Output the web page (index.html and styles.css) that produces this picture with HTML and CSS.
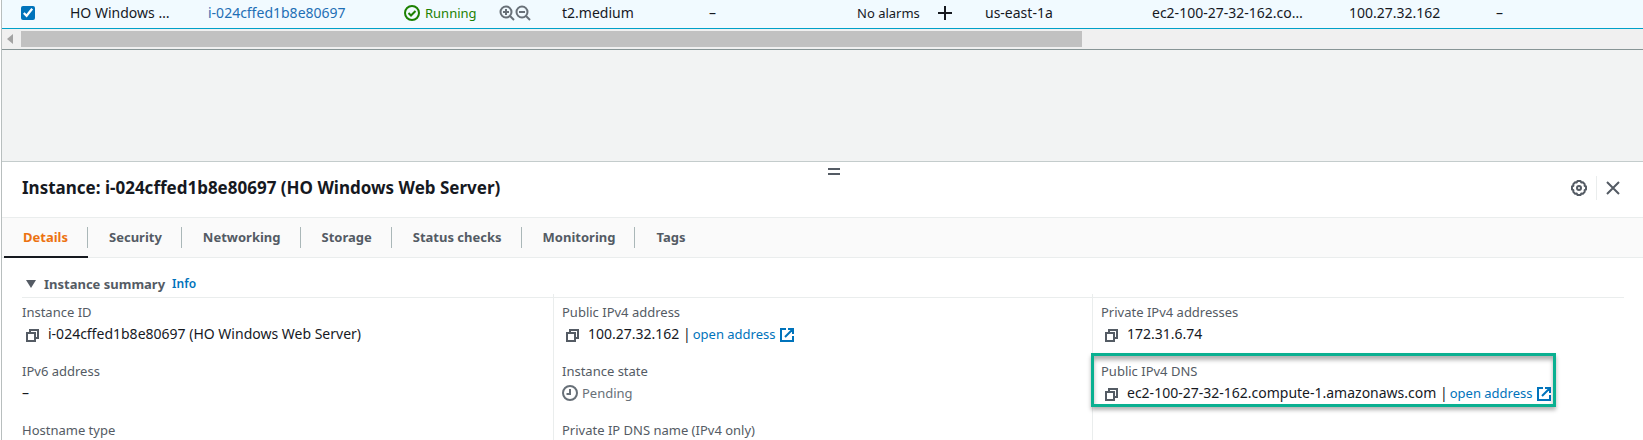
FILE: index.html
```html
<!DOCTYPE html>
<html lang="en">
<head>
<meta charset="utf-8">
<title>Instances</title>
<link rel="stylesheet" href="styles.css">
</head>
<body>
<svg class="defs" aria-hidden="true">
  <symbol id="copy" viewBox="0 0 14 14"><path d="M1 5h8v8H1zM4 5V2h8v8H9" fill="none" stroke="currentColor" stroke-width="2"/></symbol>
  <symbol id="external" viewBox="0 0 14 14"><path d="M6 1H1v12h12V8M8 1h5v5M13 1L5 9" fill="none" stroke="currentColor" stroke-width="2"/></symbol>
</svg>
<main class="page">
  <div class="table-wrap">
    <table class="instances">
      <colgroup><col class="c-check"><col class="c-name"><col class="c-id"><col class="c-state"><col class="c-type"><col class="c-status"><col class="c-alarm"><col class="c-zone"><col class="c-dns"><col class="c-ip"><col></colgroup>
      <tbody>
        <tr>
          <td><input class="check" type="checkbox" aria-label="Select instance" checked></td>
          <td>HO Windows …</td>
          <td><a class="id-link" href="#">i-024cffed1b8e80697</a></td>
          <td>
            <div class="state">
              <span class="running"><svg class="i16" viewBox="0 0 16 16"><g fill="none" stroke="currentColor" stroke-width="2"><circle cx="8" cy="8" r="7"/><path d="M4.500 8l2.500 2.500 4.500-4.500"/></g></svg>Running</span>
              <span class="zooms">
                <button class="icon-btn" aria-label="Include in filter"><svg class="i16" viewBox="0 0 16 16"><g fill="none" stroke="currentColor" stroke-width="2"><circle cx="7" cy="7" r="5.500"/><path d="M11 11l4 4"/><path d="M4 7h6M7 4v6"/></g></svg></button>
                <button class="icon-btn" aria-label="Exclude from filter"><svg class="i16" viewBox="0 0 16 16"><g fill="none" stroke="currentColor" stroke-width="2"><circle cx="7" cy="7" r="5.500"/><path d="M11 11l4 4"/><path d="M4 7h6"/></g></svg></button>
              </span>
            </div>
          </td>
          <td>t2.medium</td>
          <td>–</td>
          <td><div class="alarm">No alarms<button class="icon-btn plus" aria-label="Add alarm"><svg class="i14" viewBox="0 0 14 14"><path d="M7 0v14M0 7h14" stroke="currentColor" stroke-width="2"/></svg></button></div></td>
          <td>us-east-1a</td>
          <td>ec2-100-27-32-162.co…</td>
          <td>100.27.32.162</td>
          <td>–</td>
        </tr>
      </tbody>
    </table>
  </div>
  <div class="scrollbar"><span class="arrow"></span><span class="track"><span class="thumb"></span></span></div>
  <div class="empty"></div>

  <section class="panel">
    <header class="panel-head">
      <span class="grip"></span>
      <h2>Instance: i-024cffed1b8e80697 (HO Windows Web Server)</h2>
      <div class="actions">
        <button class="icon-btn" aria-label="Settings"><svg class="i16" viewBox="0 0 16 16"><g fill="none" stroke="currentColor" stroke-width="2" stroke-linejoin="round"><path d="M6.500 1h3l.7 1.400 1.700-.1 1.800 1.800-.1 1.700L15 6.500v3l-1.400.7.1 1.700-1.800 1.800-1.700-.1L9.500 15h-3l-.7-1.400-1.700.1-1.800-1.800.1-1.700L1 9.500v-3l1.400-.7-.1-1.700 1.800-1.800 1.700.1z"/><circle cx="8" cy="8" r="2"/></g></svg></button>
        <span class="rule"></span>
        <button class="icon-btn" aria-label="Close"><svg class="i14" viewBox="0 0 14 14"><path d="M1 1l12 12M13 1L1 13" stroke="currentColor" stroke-width="2"/></svg></button>
      </div>
    </header>
    <nav class="tabs">
      <a class="tab active" href="#">Details</a><a class="tab" href="#">Security</a><a class="tab" href="#">Networking</a><a class="tab" href="#">Storage</a><a class="tab" href="#">Status checks</a><a class="tab" href="#">Monitoring</a><a class="tab" href="#">Tags</a>
    </nav>
    <div class="summary">
      <button class="toggle"><span class="caret"></span>Instance summary</button>
      <a class="info" href="#">Info</a>
    </div>
    <div class="columns">
      <dl class="col">
        <div class="field"><dt>Instance ID</dt><dd><button class="icon-btn copy" aria-label="Copy"><svg class="i14"><use href="#copy"/></svg></button>i-024cffed1b8e80697 (HO Windows Web Server)</dd></div>
        <div class="field"><dt>IPv6 address</dt><dd>–</dd></div>
        <div class="field"><dt>Hostname type</dt></div>
      </dl>
      <dl class="col">
        <div class="field"><dt>Public IPv4 address</dt><dd><button class="icon-btn copy" aria-label="Copy"><svg class="i14"><use href="#copy"/></svg></button>100.27.32.162 |<a href="#">open address<svg class="i14 ext"><use href="#external"/></svg></a></dd></div>
        <div class="field"><dt>Instance state</dt><dd class="pending"><svg class="i16" viewBox="0 0 16 16"><g fill="none" stroke="currentColor" stroke-width="2"><circle cx="8" cy="8" r="7"/><path d="M8 4v5H4.500"/></g></svg>Pending</dd></div>
        <div class="field"><dt>Private IP DNS name (IPv4 only)</dt></div>
      </dl>
      <dl class="col">
        <div class="field"><dt>Private IPv4 addresses</dt><dd><button class="icon-btn copy" aria-label="Copy"><svg class="i14"><use href="#copy"/></svg></button>172.31.6.74</dd></div>
        <div class="field marked"><dt>Public IPv4 DNS</dt><dd><button class="icon-btn copy" aria-label="Copy"><svg class="i14"><use href="#copy"/></svg></button>ec2-100-27-32-162.compute-1.amazonaws.com |<a href="#">open address<svg class="i14 ext"><use href="#external"/></svg></a></dd></div>
      </dl>
    </div>
  </section>
</main>
</body>
</html>
```
FILE: styles.css
```css
* { box-sizing: border-box; }
body {
  margin: 0;
  background: #fff;
  color: #16191f;
  font: 14px/22px "Noto Sans", "Open Sans", sans-serif;
}
html, body { height: 100%; overflow: hidden; }
a { color: #0073bb; text-decoration: none; }
svg { display: block; flex: none; }
.defs { position: absolute; width: 0; height: 0; }
.i14 { width: 14px; height: 14px; }
.i16 { width: 16px; height: 16px; }
.icon-btn { display: flex; padding: 0; border: 0; background: none; color: #545b64; }

.page { height: 100%; overflow: hidden; margin-left: 1px; border-left: 1px solid #b8bebe; }

.table-wrap { overflow: hidden; background: #f1faff; border-bottom: 1px solid #00a1c9; }
.instances { width: 100%; table-layout: fixed; border-collapse: collapse; }
.instances td { height: 28px; padding: 0 0 2px; white-space: nowrap; line-height: 20px; }
.c-check { width: 68px; }
.c-name { width: 138px; }
.c-id { width: 196px; }
.c-state { width: 158px; }
.c-type { width: 147px; }
.c-status { width: 148px; }
.c-alarm { width: 128px; }
.c-zone { width: 167px; }
.c-dns { width: 197px; }
.c-ip { width: 147px; }
.check { display: block; width: 14px; height: 14px; margin: 0 0 0 19px; accent-color: #0073bb; }
.id-link { color: #1f6fb5; }
.state, .running, .zooms, .alarm { display: flex; align-items: center; }
.running, .alarm { font-size: 13px; }
.running { gap: 5px; width: 95px; color: #1d8102; }
.zooms .icon-btn { color: #687078; }
.plus { margin-left: 18px; color: #16191f; }

.scrollbar { display: flex; align-items: center; height: 21px; background: #f0f0f0; border-bottom: 1px solid #879596; }
.arrow { width: 19px; }
.arrow::before { content: ""; display: block; width: 0; margin-left: 5px; border: solid transparent; border-width: 5px 6px 5px 0; border-right-color: #a3a3a3; }
.track { flex: 1; }
.thumb { display: block; width: 65.400%; height: 16px; background: #c1c1c1; }
.empty { height: 111px; background: #f2f3f3; }

.panel { background: #fff; border-top: 1px solid #c4cccc; }
.panel-head { position: relative; display: flex; align-items: center; justify-content: space-between; height: 55px; padding: 0 23px 4px 20px; }
.grip { position: absolute; top: 6px; left: 50%; width: 12px; height: 7px; margin-left: 5px; border: solid #545b64; border-width: 2px 0; }
h2 { margin: 0; font-size: 17px; font-weight: 700; line-height: 24px; }
.actions { display: flex; align-items: center; gap: 9px; }
.rule { width: 1px; height: 24px; background: #eaeded; }

.tabs { display: flex; height: 41px; padding-left: 2px; background: #fafafa; border: solid #eaeded; border-width: 1px 0; }
.tab { position: relative; padding: 8px 20px 0 21px; color: #545b64; font-size: 13px; font-weight: 700; }
.tab:not(:last-child)::before { content: ""; position: absolute; top: 9px; right: 0; width: 1px; height: 21px; background: #aab7b8; }
.active { padding-left: 19px; color: #ec7211; }
.active::after { content: ""; position: absolute; left: 0; right: 0; bottom: -1px; height: 2px; background: #16191f; }

.summary { display: flex; align-items: center; gap: 7px; margin: 0 19px 0 20px; padding: 15px 0 2px; border-bottom: 1px solid #eaeded; }
.toggle { display: flex; align-items: center; gap: 8px; padding: 0 0 0 4px; border: 0; background: none; color: #545b64; font: inherit; font-size: 13px; font-weight: 700; }
.caret { border: solid transparent; border-width: 8px 5px 0; border-top-color: #545b64; }
.info { font-size: 12px; font-weight: 600; }

.columns { display: grid; grid-template-columns: repeat(3, 1fr); margin: -4px 12px 0; }
.col { margin: 0; padding: 7px 0 0 8px; }
.col + .col { border-left: 1px solid #eaeded; }
.field { position: relative; width: fit-content; height: 59px; white-space: nowrap; }
dt { color: #545b64; font-size: 13px; }
dd { display: flex; align-items: center; margin: 0; }
dd a { display: flex; align-items: center; gap: 4px; margin-left: 2px; font-size: 13px; }
.copy { margin: 2px 8px 0 4px; }
.ext { margin-top: 1px; }
.pending { gap: 4px; color: #687078; font-size: 13px; }
.marked::after { content: ""; position: absolute; top: -7px; left: -10px; right: -5px; bottom: 12px; border: 3px solid #0ab091; box-shadow: 0 3px 4px rgba(0, 0, 0, .3), inset 0 4px 4px rgba(0, 0, 0, .3); pointer-events: none; }
```
